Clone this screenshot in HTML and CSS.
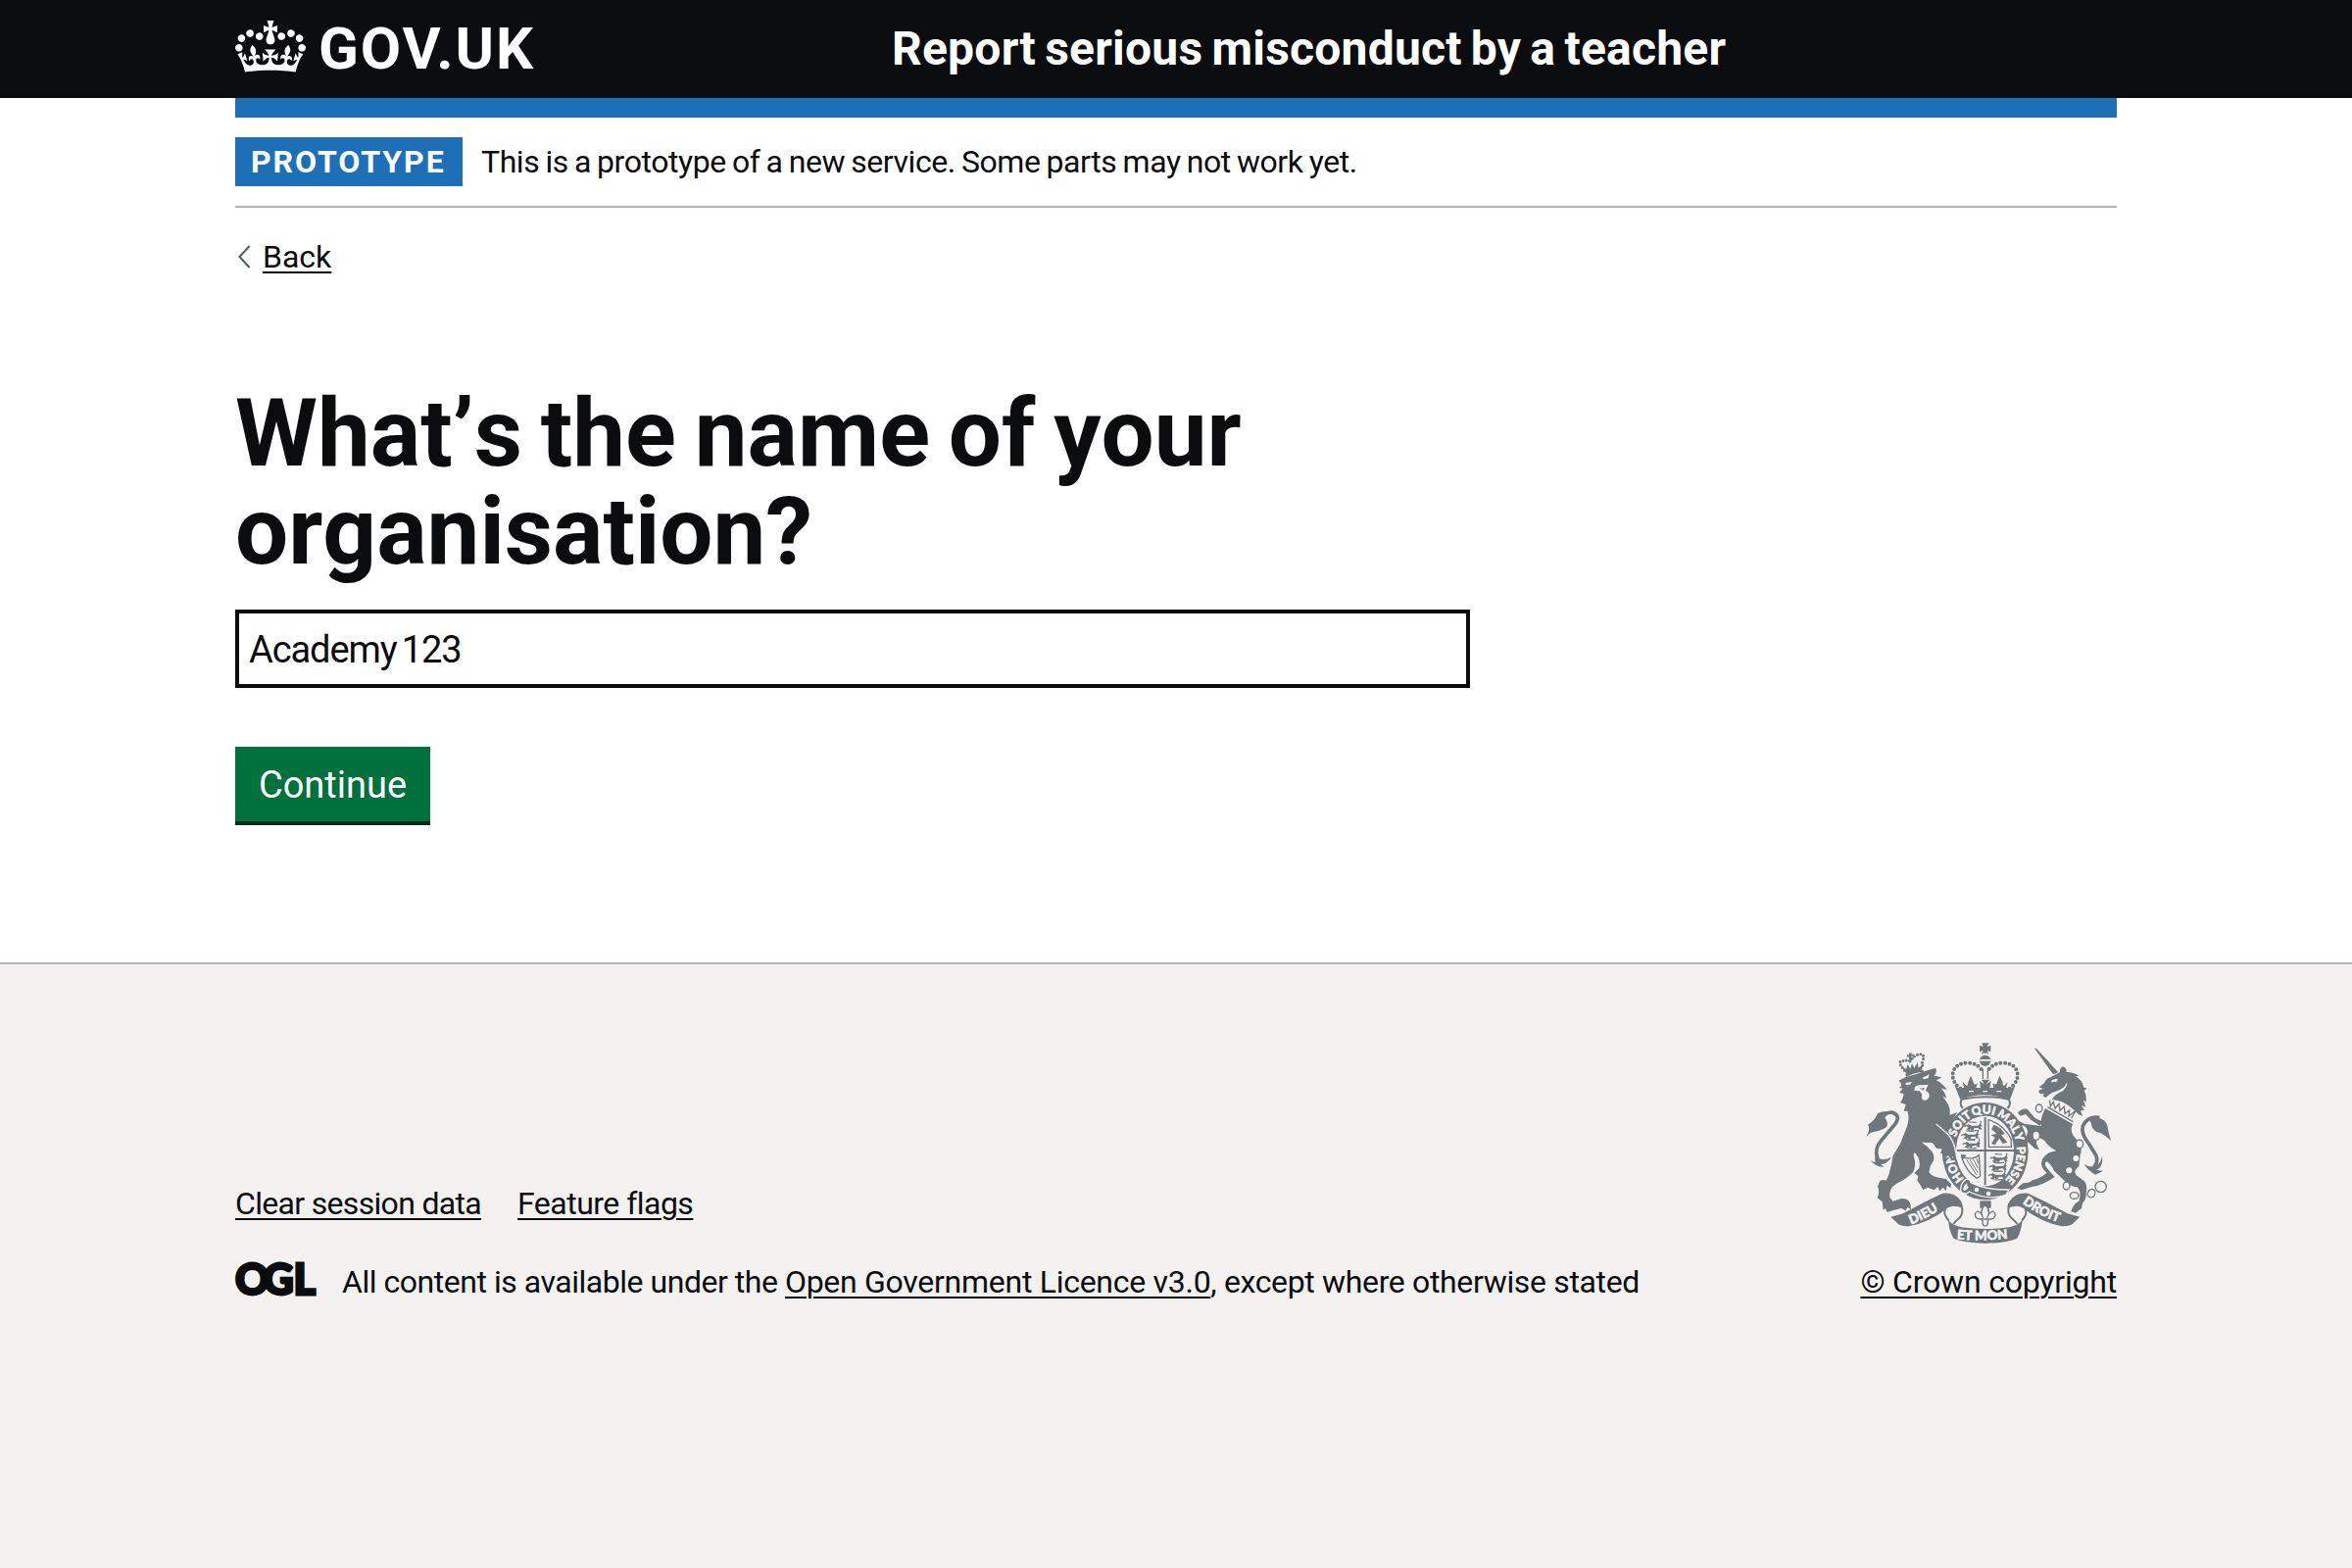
FILE: index.html
```html
<!DOCTYPE html>
<html lang="en">
<head>
<meta charset="utf-8">
<title>What’s the name of your organisation?</title>
<link rel="stylesheet" href="styles.css">
</head>
<body>
<header class="header">
  <div class="container header-inner">
    <a class="logo" href="#">
      <svg class="crown" viewBox="0 0 132 97" aria-hidden="true"><path fill="currentColor" fill-rule="evenodd" d="M25 30.2c3.5 1.5 7.7-.2 9.1-3.7 1.5-3.6-.2-7.8-3.9-9.2-3.6-1.4-7.6.3-9.1 3.9-1.4 3.5.3 7.5 3.9 9zM9 39.5c3.6 1.5 7.8-.2 9.2-3.7 1.5-3.6-.2-7.8-3.9-9.1-3.6-1.5-7.6.2-9.1 3.8-1.4 3.5.3 7.5 3.8 9zM4.4 57.2c3.5 1.5 7.7-.2 9.1-3.8 1.5-3.6-.2-7.7-3.9-9.1-3.5-1.5-7.6.3-9.1 3.8-1.4 3.5.3 7.6 3.9 9.1zm38.3-21.4c3.5 1.5 7.7-.2 9.1-3.8 1.5-3.6-.2-7.7-3.9-9.1-3.6-1.5-7.6.3-9.1 3.8-1.3 3.6.4 7.7 3.9 9.1zm64.4-5.6c-3.6 1.5-7.8-.2-9.1-3.7-1.5-3.6.2-7.8 3.8-9.2 3.6-1.4 7.7.3 9.2 3.9 1.3 3.5-.4 7.5-3.9 9zm15.9 9.3c-3.6 1.5-7.7-.2-9.1-3.7-1.5-3.6.2-7.8 3.7-9.1 3.6-1.5 7.7.2 9.2 3.8 1.5 3.5-.3 7.5-3.8 9zm4.7 17.7c-3.6 1.5-7.8-.2-9.2-3.8-1.5-3.6.2-7.7 3.9-9.1 3.6-1.5 7.7.3 9.2 3.8 1.3 3.5-.4 7.6-3.9 9.1zM89.3 35.8c-3.6 1.5-7.8-.2-9.2-3.8-1.4-3.6.2-7.7 3.9-9.1 3.6-1.5 7.7.3 9.2 3.8 1.4 3.6-.3 7.7-3.9 9.1zM69.7 17.7l8.9 4.7V9.3l-8.9 2.8c-.2-.3-.5-.6-.9-.9L72.4 0H59.6l3.5 11.2c-.3.3-.6.5-.9.9l-8.8-2.8v13.1l8.8-4.7c.3.3.6.7.9.9l-5 15.4v.1c-.2.8-.4 1.6-.4 2.4 0 4.1 3.1 7.5 7 8.1h.2c.3 0 .7.1 1 .1.4 0 .7 0 1-.1h.2c4-.6 7.1-4.1 7.1-8.1 0-.8-.1-1.7-.4-2.4V34l-5.1-15.4c.4-.2.7-.6 1-.9zM66 92.8c16.9 0 32.8 1.1 47.1 3.2 4-16.9 8.9-26.7 14-33.5l-9.6-3.4c1 4.9 1.1 7.2 0 10.2-1.5-1.4-3-4.3-4.2-8.7L108.6 76c2.8-2 5-3.2 7.5-3.3-4.4 9.4-10 11.9-13.6 11.2-4.3-.8-6.3-4.6-5.6-7.9 1-4.7 5.7-5.9 8-.5 4.3-8.7-3-11.4-7.6-8.8 7.1-7.2 7.9-13.5 2.1-21.1-8 6.1-8.1 12.3-4.5 20.8-4.7-5.4-12.1-2.5-9.5 6.2 3.4-5.2 7.9-2 7.2 3.1-.6 4.3-6.4 7.8-13.5 7.2-10.3-.9-10.9-8-11.2-13.8 2.5-.5 7.1 1.8 11 7.3L80.2 60c-4.1 4.4-8 5.3-12.3 5.4 1.4-4.4 8-11.6 8-11.6H55.5s6.4 7.2 7.9 11.6c-4.2-.1-8-1-12.3-5.4l1.4 16.4c3.9-5.5 8.5-7.7 10.9-7.3-.3 5.8-.9 12.8-11.1 13.8-7.2.6-12.9-2.9-13.5-7.2-.7-5 3.8-8.3 7.1-3.1 2.7-8.7-4.6-11.6-9.4-6.2 3.7-8.5 3.6-14.7-4.6-20.8-5.8 7.6-5 13.9 2.2 21.1-4.7-2.6-11.9.1-7.7 8.8 2.3-5.5 7.1-4.2 8.1.5.7 3.3-1.3 7.1-5.7 7.9-3.5.7-9-1.8-13.5-11.2 2.5.1 4.7 1.3 7.5 3.3l-4.7-15.4c-1.2 4.4-2.7 7.2-4.3 8.7-1.1-3-.9-5.3 0-10.2l-9.5 3.4c5 6.9 9.9 16.7 14 33.5 14.8-2.1 30.8-3.2 47.7-3.2z"/></svg>
      <span class="logo-text">GOV.UK</span>
    </a>
    <a class="service-name" href="#">Report serious misconduct by a teacher</a>
  </div>
</header>
<div class="container page">
  <div class="phase-banner">
    <strong class="tag">PROTOTYPE</strong>
    <span class="phase-text">This is a prototype of a new service. Some parts may not work yet.</span>
  </div>
  <a class="back-link" href="#">
    <svg class="chevron" viewBox="0 0 14 24" aria-hidden="true"><path d="M12.5 1 2.5 12l10 11" fill="none" stroke="#505a5f" stroke-width="2"/></svg>
    <span class="back-text">Back</span>
  </a>
  <main class="main">
    <h1 class="heading"><label for="organisation">What’s the name of your organisation?</label></h1>
    <input class="input" id="organisation" type="text" value="Academy 123">
    <button class="button" type="button">Continue</button>
  </main>
</div>
<footer class="footer">
  <div class="container footer-inner">
    <div class="footer-meta">
      <div class="footer-links">
        <a class="link clear-link" href="#">Clear session data</a>
        <a class="link flags-link" href="#">Feature flags</a>
      </div>
      <div class="licence">
        <svg class="ogl" viewBox="0 0 82 34" aria-label="OGL"><text class="ogl-text" y="32.5" x="0 28.5 59.5">OGL</text></svg>
        <span class="licence-text"><span class="licence-lead">All content is available under the </span><a class="link licence-link" href="#">Open Government Licence v3.0</a>, except where otherwise stated</span>
      </div>
    </div>
    <div class="copyright">
      <svg class="arms" viewBox="72 41 750 615" aria-hidden="true">
        <defs>
          <path id="garter" d="M437 486A97 114 0 0 1 437 258A97 114 0 0 1 437 486"/>
          <path id="motto-left" d="M210 597Q268 575 318 537"/>
          <path id="motto-right" d="M551 532Q608 576 680 596"/>
          <path id="motto-centre" d="M350 642Q437 650 526 638"/>
          <g id="beast">
            <path d="M0 6l8-6 8 5 20 0 8-4 6 3-5 5 4 7-8 1-4-6-12 2-2 5-7 0-1-5-7 6-7-2 7-7z"/>
            <path d="M40 5q10-10 4-14M3 3L-5 8M14 12l-5 8M10-6l22 1M12 21l26-1" fill="none" stroke="currentColor" stroke-width="3.5"/>
          </g>
        </defs>
        <g class="ink">
          <!-- lion: crown, mane and body, tail -->
          <path d="M196 136l-13-22 12 8 5-15 8 14 5-17 7 15 10-18 3 17 13-11-3 20q-24 1-47 9z"/>
          <path class="pearls small" d="M190 126Q166 96 184 97Q199 92 207 98M207 98Q219 80 233 77Q253 74 247 92T247 112"/>
          <path d="M198 76l6 3 1-7 7 0-1 6 7-3 0 8-7-1 2 12-8 1-2-11-6 1z"/>
          <path d="M192 137q26-12 55-13l3 7q-28 0-54 15z"/>
          <path d="M172 157Q196 143 226 137Q258 126 285 118Q292 132 280 142L304 147Q298 154 287 155Q304 164 320 184Q311 185 302 180Q314 192 318 211L306 204Q315 215 324 231Q330 242 329 262L352 254Q341 271 333 283Q318 306 318 320L335 345L340 372L347 398L338 389L333 400L325 386L314 398L312 380L302 380L306 366L289 365L292 349L279 354L276 347L243 346Q263 359 275 375Q283 391 279 402Q267 418 265 436Q268 446 289 453L317 458L333 474L332 486L320 478L317 495L308 484L298 495L292 482L280 492L262 484L247 491L237 474L229 463L232 450L220 440L235 425Q241 402 225 381Q216 374 219 390Q227 419 216 438Q195 459 165 473Q141 487 145 515L155 526L180 518Q204 518 208 534L210 551L199 545L194 555L180 548Q159 552 137 560L132 548L125 553L122 528L107 516Q115 495 108 481L112 470Q117 456 134 463L142 445L150 414L155 387L177 350L197 300Q207 270 199 250L188 250L194 230L177 224Q188 210 187 197L174 194L185 181L173 179Q189 171 172 157z"/>
          <path class="tail" d="M120 282Q126 253 151 254Q180 263 163 288L119 340Q96 365 108 397"/>
          <path d="M72 330Q88 304 78 292Q99 280 108 257Q121 250 144 251L126 268Q142 280 136 298Q116 312 98 313Q84 315 72 330zM99 393Q107 385 113 396Q130 402 150 391Q137 413 117 413L127 421Q105 424 86 402L101 408z"/>
          <!-- unicorn: horn, head and mane, body, tail -->
          <path d="M587 57L595 60L661 132L645 138z"/>
          <path d="M634 148L666 131Q662 124 674 114Q687 117 686 131Q708 131 724 142L713 143Q737 157 738 177L748 181L740 187Q749 205 745 223L737 216L745 238L731 233L741 247L729 249L735 266Q722 262 710 248L691 232L672 222L642 214Q651 198 676 188Q693 167 687 165Q674 188 643 193Q628 201 623 210L613 204L618 197L605 198L600 188L614 181L602 177L618 165Q622 151 634 148z"/>
          <path d="M621 242L705 290Q692 314 717 337Q738 362 728 385L724 420Q705 432 716 447L741 465Q751 481 746 500Q748 520 735 532L732 548L714 562L700 557Q704 543 714 532L724 526Q734 493 718 483Q697 482 673 457L648 433Q644 420 626 404Q612 411 634 434L650 452Q610 479 580 482L548 492L535 486L553 471Q574 471 582 462Q609 454 626 439Q602 420 612 397Q627 375 655 372Q633 362 619 341L600 330Q586 345 603 368L590 366L567 345L546 332L545 321L563 327Q573 308 557 295L541 292L542 282L559 290L609 296Q603 277 621 242z"/>
          <path d="M537 255Q549 240 566 244L590 272L614 283L605 295L579 279L561 260L544 265z"/>
          <path class="tail" d="M787 270Q750 265 736 296Q729 319 755 351L777 387Q786 412 763 428"/>
          <path d="M757 278Q780 264 795 276Q812 284 813 307L822 342Q800 318 778 314Q762 304 762 289zM795 387Q801 419 778 431L799 433L775 445Q755 435 739 412Q754 423 774 421Q792 411 795 387z"/>
          <!-- royal crown -->
          <path d="M427 42h21l-5 12 11-5v20l-11-4 5 11h-22l5-11-11 4V49l11 5z"/>
          <circle cx="437" cy="96" r="17"/>
          <path class="pearls" d="M361 181Q334 160 338 134Q345 103 384 103Q414 103 428 127M512 181Q540 160 536 134Q529 103 490 103Q460 103 446 127"/>
          <path class="line" d="M430 122V152M445 122V152"/>
          <path d="M361 215L343 170Q352 180 360 181L372 178L368 160L380 173Q385 172 385 162L393 142L401 162Q403 174 414 165L409 178L423 180L420 158L434 168L426 154H450L441 168L455 158L451 180L463 178L460 165Q472 174 474 162L481 142L491 162Q490 174 495 173L506 160L501 178L513 181Q524 180 530 170L513 215Q437 187 361 215z"/>
          <path class="line heavy" d="M365 214Q437 199 509 214Q518 228 506 242M365 214Q358 228 368 242"/>
        </g>
        <g class="paper"><path d="M429 73h16v5h-16zM421 92h32v5h-32z"/><path d="M387 188h15v4h-15zM430 188h14v4h-14zM472 188h15v4h-15z"/></g>
        <g class="ink">
          <!-- garter and quartered shield -->
          <ellipse cx="437" cy="373" rx="132" ry="149"/>
          <path class="paper" d="M437 265C387 265 348 309 348 371S386 480 437 480S525 431 525 371S487 265 437 265z"/>
          <path d="M351 368h174v6H351zM434 269h6v207h-6z"/>
        </g>
        <g class="ink">
          <use href="#beast" x="378" y="290"/><use href="#beast" x="369" y="317"/><use href="#beast" x="373" y="344"/>
          <use href="#beast" x="457" y="388"/><use href="#beast" x="454" y="414"/><use href="#beast" x="452" y="440"/>
          <path class="line" d="M447 277Q495 291 517 337V360H448z"/>
          <path d="M464 292L484 303L498 320L486 324L505 346L491 350L480 334L467 354L456 350L467 331L455 324L472 319L456 306z"/>
          <path class="line" d="M363 391Q400 401 418 385L422 449L412 456Q382 439 366 395"/>
          <path class="thin" d="M380 399L411 446M390 399L414 438M400 397L416 426M410 394L416 411"/>
          <path d="M362 382l18 3-12 15z"/>
        </g>
        <g class="paper lettering garter-letters">
          <text><textPath href="#garter" startOffset="72">HON</textPath></text>
          <text><textPath href="#garter" startOffset="208">SOIT</textPath></text>
          <text><textPath href="#garter" startOffset="293">QUI</textPath></text>
          <text><textPath href="#garter" startOffset="367">MAL</textPath></text>
          <text><textPath href="#garter" startOffset="446">Y</textPath></text>
          <text><textPath href="#garter" startOffset="484">PENSE</textPath></text>
        </g>
        <!-- lion's foreleg over the garter -->
        <path class="ink" d="M296 284L326 317Q338 338 341 362L349 398L338 389L334 400L324 386L314 396L311 381L300 380L306 366L286 363L270 330z"/>
        <path class="parting" d="M287 290L322 320Q338 338 344 362L352 400"/>
        <!-- buckle -->
        <path class="ink edge" d="M362 489Q363 469 378 459Q391 456 393 469Q437 492 510 491L500 507Q448 526 388 497L379 503Q361 503 362 489z"/>
        <g class="paper"><circle cx="411" cy="491" r="7"/><circle cx="447" cy="503" r="7"/><path d="M369 489q5-15 13-18-2 8 4 12-4 10-14 11z"/></g>
        <g class="ink">
          <path d="M421 525h34v22h-34z"/>
          <path class="line fleur" d="M437 536Q456 555 443 577Q448 562 460 557Q474 564 464 577Q456 583 448 581L444 590A8 8 0 1 1 430 590L426 581Q418 583 410 577Q400 564 414 557Q426 562 431 577Q418 555 437 536zM419 581h36"/>
          <!-- motto ribbon -->
          <path d="M148 574L186 564Q251 527 307 502Q345 498 362 525Q370 538 368 548Q352 540 334 542Q320 546 316 552Q262 593 203 603Q175 604 165 590z"/>
          <path d="M727 574L689 564Q624 527 568 502Q530 498 513 525Q503 538 506 548Q523 540 541 542Q555 546 559 552Q613 593 672 603Q700 604 710 590z"/>
          <path class="line heavy" d="M366 545Q371 568 353 582Q343 590 340 596M316 552Q306 561 326 586M509 545Q504 568 522 582Q532 590 535 596M559 552Q569 561 549 586"/>
          <path d="M324 584Q340 602 365 606Q437 616 510 606Q535 602 551 584Q548 618 535 640Q500 654 437 655Q374 654 340 640Q326 615 324 584z"/>
        </g>
        <g class="paper lettering">
          <text><textPath href="#motto-left">DIEU</textPath></text>
          <text><textPath href="#motto-right">DROIT</textPath></text>
          <text><textPath href="#motto-centre">ET MON</textPath></text>
        </g>
        <g class="paper">
          <!-- lion face, unicorn eye and spots -->
          <path d="M193 164l20-3-6 8-12 2zM244 149l22-11-3 11-13 4zM222 176q12-8 22-5l19-2-9 20q13 2 12 17-4 11-14 12-13-3-8-19l-8-10-16-2z"/>
          <path d="M640 157q10-8 20-4l-5 8q-8-3-15 2z"/>
          <circle cx="715" cy="395" r="9"/><circle cx="694" cy="432" r="9"/>
        </g>
        <path class="ink" d="M234 178l8 3 10-3-5 9z"/>
        <!-- collar -->
        <path class="collar" d="M626 240L634 217L712 257L722 268L708 288z"/>
        <path class="line" d="M628 238L706 283M634 217l3 18 9-13 5 20 12-14 3 21 13-12 2 21 14-10-2 18 22-18-14 24"/>
        <!-- chain -->
        <g class="line ring"><ellipse cx="602" cy="242" rx="10" ry="12"/><ellipse cx="593" cy="325" rx="11" ry="14"/><ellipse cx="726" cy="351" rx="11" ry="13"/><ellipse cx="686" cy="479" rx="10" ry="12"/><ellipse cx="710" cy="509" rx="13" ry="10"/><ellipse cx="762" cy="502" rx="11" ry="13" transform="rotate(35 762 502)"/><circle cx="791" cy="482" r="17"/></g>
      </svg>
      <a class="link crown-link" href="#">© Crown copyright</a>
    </div>
  </div>
</footer>
</body>
</html>
```
FILE: styles.css
```css
* { box-sizing: border-box; }
body {
  margin: 0;
  min-height: 100vh;
  display: flex;
  flex-direction: column;
  background: #fff;
  color: #0b0c0e;
  font: 400 32px/40px Roboto, "Liberation Sans", Arial, sans-serif;
}
a { color: inherit; text-decoration: none; }
.container { width: 1920px; margin: 0 auto; }

.header { height: 100px; background: #0b0c0e; color: #fff; }
.header-inner { height: 100%; display: grid; grid-template-columns: 670px 1fr; align-items: center; }
.logo { display: flex; align-items: center; gap: 13px; }
.crown { width: 72px; height: 53px; margin-top: -5px; flex: none; }
.logo-text { font-size: 60px; line-height: 60px; font-weight: 700; letter-spacing: 1.9px; }
.service-name { font-size: 48px; line-height: 60px; font-weight: 700; letter-spacing: 0.22px; word-spacing: -3px; }

.page { border-top: 20px solid #1d70b8; }
.phase-banner { display: flex; gap: 19px; padding: 20px 0; border-bottom: 2px solid #b1b4b6; }
.tag { width: 232px; height: 50px; padding-left: 16px; background: #1d70b8; color: #fff; font-weight: 700; line-height: 51px; letter-spacing: 1.95px; }
.phase-text { line-height: 50px; letter-spacing: -0.43px; word-spacing: -1.4px; }
.back-link { display: flex; align-items: center; gap: 12px; width: max-content; margin: 30px 0 0 2px; }
.chevron { width: 14px; height: 24px; }
.back-text { text-decoration: underline 2px; text-underline-offset: 4px; }

.main { width: 1260px; padding: 110px 0 144px; display: flex; flex-direction: column; align-items: flex-start; }
.heading { margin: 0 0 30px; font-size: 96px; line-height: 100px; font-weight: 700; font-kerning: none; word-spacing: -5px; }
.input { width: 1260px; height: 80px; margin: 0 0 60px; padding: 2px 10px 0; border: 4px solid #0b0c0e; border-radius: 0; background: #fff; color: #0b0c0e; font: inherit; font-size: 38px; letter-spacing: -1.1px; word-spacing: -3px; }
.button { width: 199px; height: 76px; padding: 2px 0 0; border: 0; background: #00703c; box-shadow: 0 4px 0 #002d18; color: #fff; font: inherit; font-size: 38px; }

.footer { flex: 1; padding-top: 80px; border-top: 2px solid #b1b4b6; background: #f3f2f1; }
.footer-inner { display: flex; justify-content: space-between; align-items: flex-end; }
.link { text-decoration: underline 2px; text-underline-offset: 4px; }
.footer-links { display: flex; gap: 37px; margin-bottom: 40px; }
.clear-link { letter-spacing: -0.68px; }
.flags-link { letter-spacing: -0.52px; }
.licence { display: flex; gap: 27px; }
.ogl { width: 82px; height: 34px; overflow: visible; }
.ogl-text { font: 900 43px Lato, sans-serif; fill: #0b0c0e; stroke: #0b0c0e; stroke-width: 2.8px; }
.licence-text { letter-spacing: -0.35px; }
.licence-lead { letter-spacing: -0.47px; }
.licence-link { letter-spacing: -0.28px; }
.copyright { display: flex; flex-direction: column; align-items: flex-end; gap: 19px; }
.crown-link { letter-spacing: -0.2px; }

.arms { width: 250px; height: 205px; margin-right: 6px; color: #6f777b; }
.ink { fill: #6f777b; }
.paper { fill: #f3f2f1; }
.edge { stroke: #f3f2f1; stroke-width: 4px; }
.parting { fill: none; stroke: #f3f2f1; stroke-width: 4px; }
.collar { fill: #f3f2f1; }
.line, .thin, .tail, .pearls { fill: none; stroke: #6f777b; }
.line { stroke-width: 4px; }
.ring, .fleur { fill: #f3f2f1; }
.heavy { stroke-width: 6px; }
.thin { stroke-width: 3px; }
.tail { stroke-width: 11px; }
.pearls { stroke-width: 12px; stroke-linecap: round; stroke-dasharray: 0 13.5px; }
.small { stroke-width: 9px; stroke-dasharray: 0 10px; }
.lettering { font: 900 40px Lato, sans-serif; stroke: #f3f2f1; stroke-width: 1.6px; }
.garter-letters { font-size: 36px; }
```
